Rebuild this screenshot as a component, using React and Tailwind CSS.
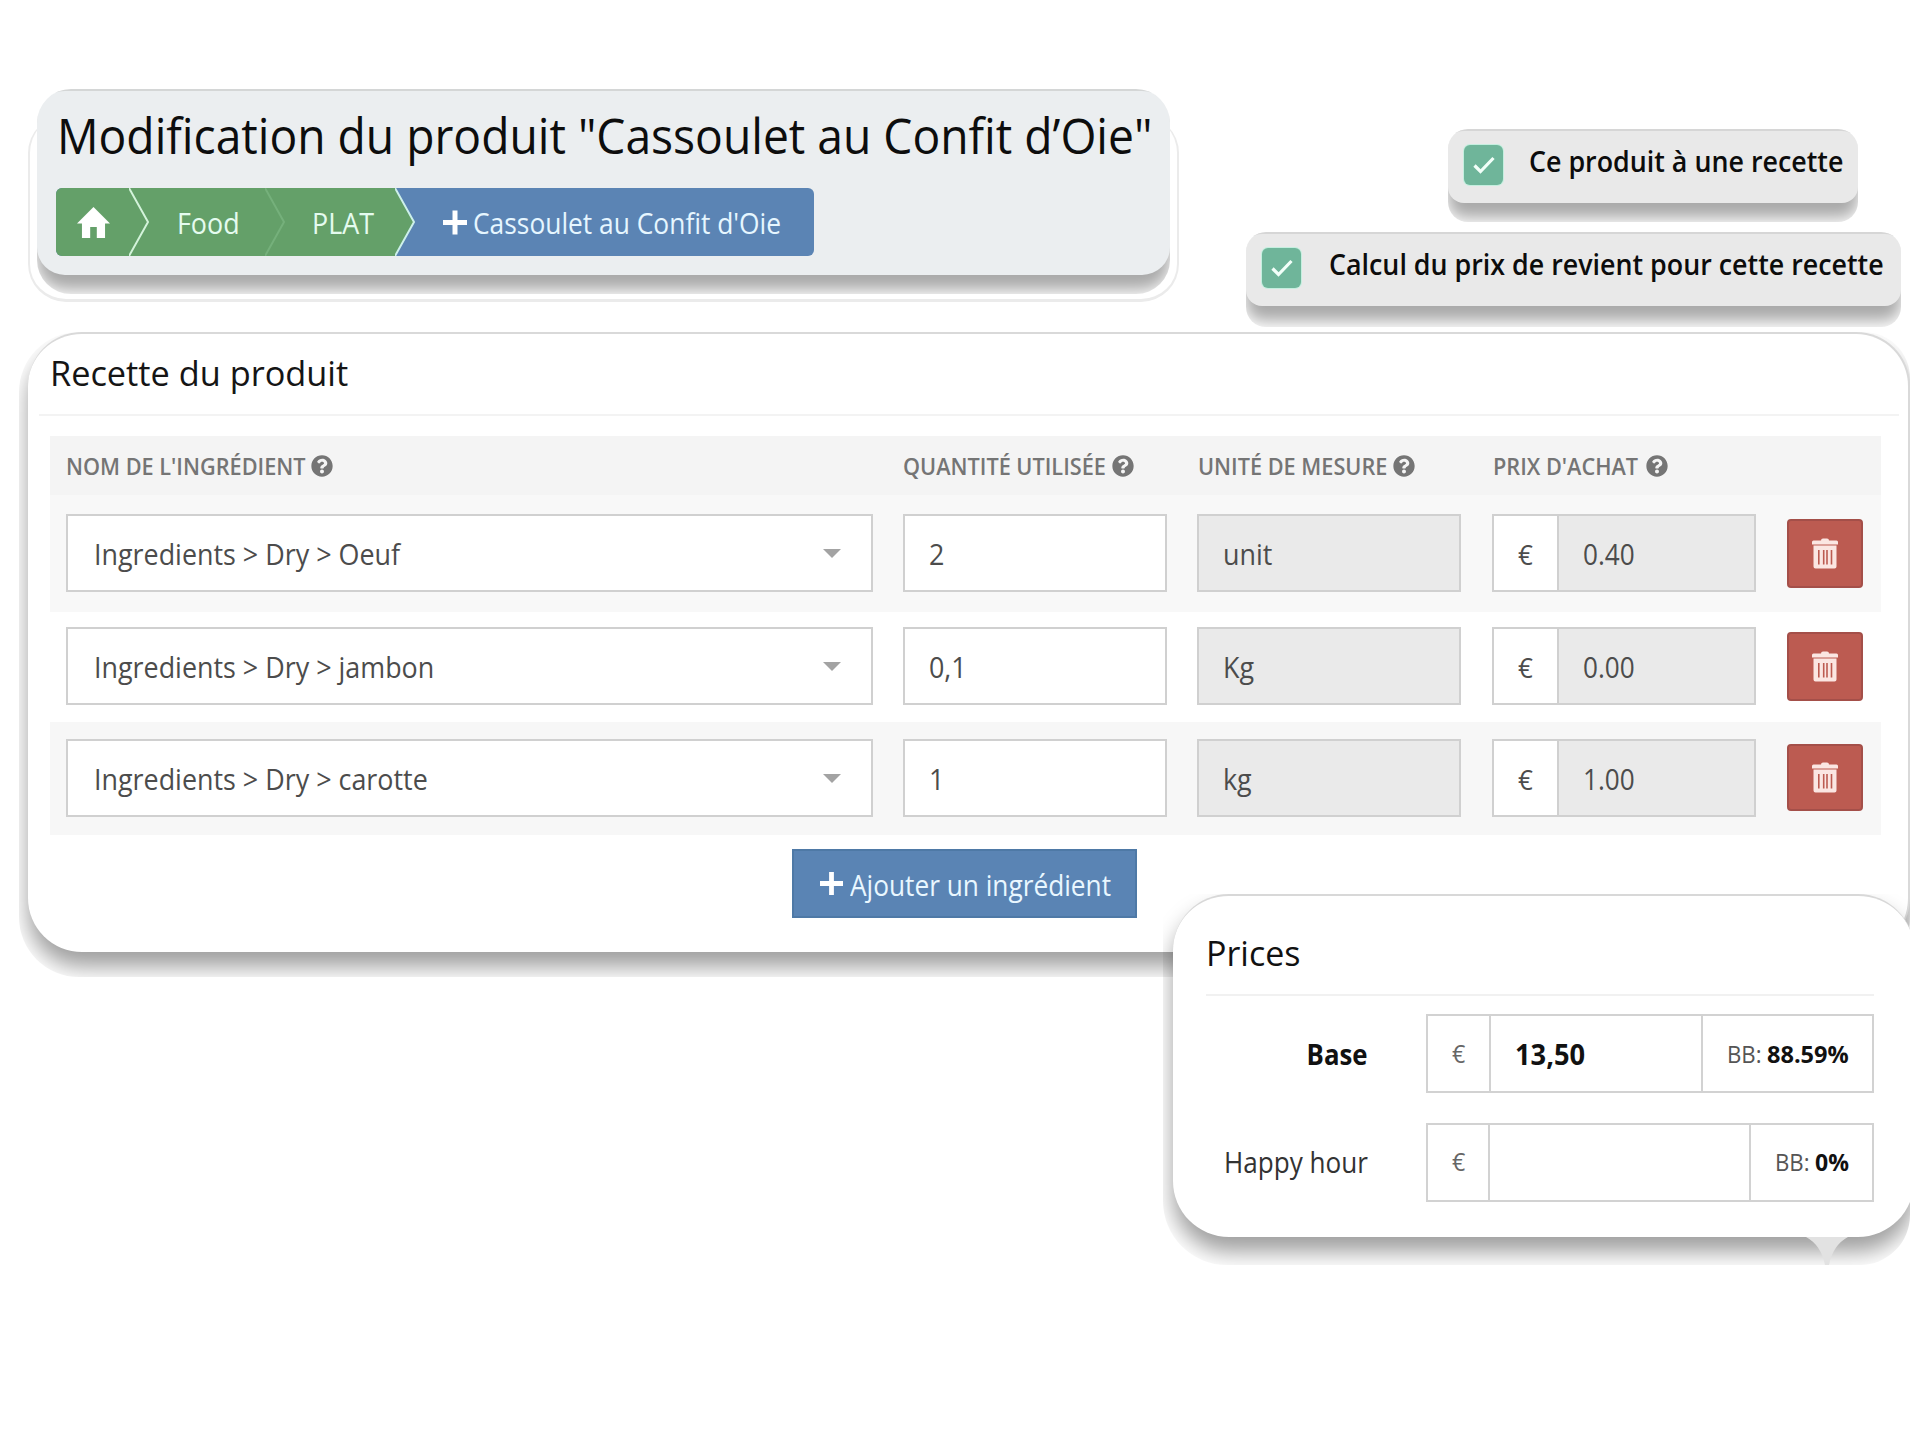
import { FaQuestionCircle } from 'react-icons/fa';

const ingredients = [
  { name: 'Ingredients > Dry > Oeuf', qty: '2', unit: 'unit', price: '0.40' },
  { name: 'Ingredients > Dry > jambon', qty: '0,1', unit: 'Kg', price: '0.00' },
  { name: 'Ingredients > Dry > carotte', qty: '1', unit: 'kg', price: '1.00' },
];

// slightly condensed label, squeezed towards its origin
function Text({ className = 'origin-left scale-x-[0.927]', children }) {
  return <span className={`inline-block whitespace-nowrap ${className}`}>{children}</span>;
}

function PlusIcon({ className }) {
  return (
    <svg className={`shrink-0 ${className}`} viewBox="0 0 24 24" fill="currentColor">
      <path d="M9.5 0h5v9.5H24v5h-9.5V24h-5v-9.5H0v-5h9.5z" />
    </svg>
  );
}

function TrashIcon() {
  return (
    <svg className="h-[31px] w-[26px] text-[#fbe6e2]" viewBox="0 0 26 31" fill="currentColor">
      <path d="M9 2.5Q9 .5 11 .5h4Q17 .5 17 2.5h7.5Q26 2.5 26 4v2.5H0V4Q0 2.5 1.5 2.5z" />
      <path fillRule="evenodd" d="M1.5 7.5h23v21q0 2-2 2h-19q-2 0-2-2zM6 12v14.500h1.600V12zm4.900 0v14.500h1.600V12zm3.300 0v14.500h1.600V12zm4.500 0v14.500h1.600V12z" />
    </svg>
  );
}

function Chevron({ stroke, fill, className }) {
  return (
    <svg className={`h-full w-5 shrink-0 ${className}`} viewBox="0 0 20 68" fill="none">
      <path d="M0 0 19 34 0 68z" fill={fill} />
      <path d="M0 0 19 34 0 68" stroke={stroke} strokeWidth="2" />
    </svg>
  );
}

function Breadcrumb() {
  return (
    <nav className="flex h-[68px] w-[758px] items-center overflow-hidden rounded-[6px] bg-[#5b84b4] text-[29px] text-[#e4fbef]">
      <span className="flex h-full w-[73px] items-center bg-[#64a069] pl-[21px]">
        <svg className="h-[31px] w-[33px] text-white" viewBox="2 3 20 17" preserveAspectRatio="none" fill="currentColor">
          <path d="M10 20v-6h4v6h5v-8h3L12 3 2 12h3v8z" />
        </svg>
      </span>
      <Chevron stroke="#d3f3da" fill="#64a069" className="bg-[#64a069]" />
      <span className="flex h-full w-[116px] items-center bg-[#64a069] pt-[2px] pl-[28px]">
        <Text>Food</Text>
      </span>
      <Chevron stroke="#75b07b" fill="#64a069" className="bg-[#64a069]" />
      <span className="flex h-full w-[110px] items-center bg-[#64a069] pt-[2px] pl-[27px]">
        <Text>PLAT</Text>
      </span>
      <Chevron stroke="#cdf0ea" fill="#64a069" className="" />
      <PlusIcon className="ml-7 h-[25px] w-[24px] text-white" />
      <span className="mt-[2px] ml-[6px] text-[#e6f6ff]">
        <Text className="origin-left scale-x-[0.909]">Cassoulet au Confit d'Oie</Text>
      </span>
    </nav>
  );
}

function OptionCard({ wrapClass, labelClass, label }) {
  return (
    <div className={`overflow-hidden rounded-[20px] ${wrapClass}`}>
      <div className="flex h-[74px] rounded-[16px] border-t-2 border-[#d6d6d6] bg-[#e9e9e9] shadow-[0_15px_16px_rgba(0,0,0,0.34)]">
        <span className="mt-[14px] ml-[16px] flex h-10 w-[39px] shrink-0 items-center justify-center rounded-[6px] bg-[#6fb59a] ring-1 ring-[#c4efdf]">
          <svg className="h-[18px] w-[22px]" viewBox="0 0 22 18" fill="none" stroke="#f2fff9" strokeWidth="3.2">
            <path d="M1.5 9.5 7.5 15.5 20.5 2" />
          </svg>
        </span>
        <span className={`mt-[8px] text-[28px] leading-[44px] font-semibold text-[#0c0c0c] ${labelClass}`}>
          <Text className="origin-left scale-x-[0.958]">{label}</Text>
        </span>
      </div>
    </div>
  );
}

function HeadCell({ className, labelClass, label }) {
  return (
    <div className={`flex h-[34px] items-center ${className}`}>
      <span className={labelClass}>
        <Text className="origin-left scale-x-[0.943]">{label}</Text>
      </span>
      <FaQuestionCircle className="h-[22px] w-[22px] text-[#757575]" />
    </div>
  );
}

function IngredientRow({ item, className, buttonClass = 'h-[69px]' }) {
  return (
    <div className={`flex pl-[16px] text-[29px] text-[#4c4c4c] ${className}`}>
      <div className="flex h-[78px] w-[807px] items-center justify-between border-2 border-[#d0d0d0] bg-white pr-[30px] pl-[26px]">
        <span className="mt-[1px]"><Text>{item.name}</Text></span>
        <svg className="h-[9px] w-[18px]" viewBox="0 0 18 9" fill="#a3a3a3">
          <path d="M0 0h18L9 9z" />
        </svg>
      </div>
      <div className="ml-[30px] flex h-[78px] w-[264px] items-center border-2 border-[#d0d0d0] bg-white pt-[1px] pl-[24px]">
        <Text>{item.qty}</Text>
      </div>
      <div className="ml-[30px] flex h-[78px] w-[264px] items-center border-2 border-[#d0d0d0] bg-[#eaeaea] pt-[1px] pl-[24px]">
        <Text>{item.unit}</Text>
      </div>
      <div className="ml-[31px] flex h-[78px] w-[264px] border-2 border-[#d0d0d0] bg-[#eaeaea]">
        <span className="flex w-[65px] items-center border-r-2 border-[#d0d0d0] bg-white pt-[1px] pl-6 text-[28px]">
          <Text>€</Text>
        </span>
        <span className="flex items-center pt-[1px] pl-6">
          <Text className="origin-left scale-x-[0.9]">{item.price}</Text>
        </span>
      </div>
      <button className={`mt-[5px] ml-[31px] flex w-[76px] items-center justify-center rounded-[4px] border-2 border-[#a44f49] bg-[#bc5b51] ${buttonClass}`}>
        <TrashIcon />
      </button>
    </div>
  );
}

function Prices() {
  return (
    <section className="mt-[-83px] ml-[1163px] h-[371px] w-[747px] overflow-hidden rounded-bl-[64px] rounded-br-[50px] pl-[10px]">
      <div className="relative h-[343px] w-[741px] rounded-[56px] border-t-2 border-[#d8d8d8] bg-white pt-[33px] pl-[33px] shadow-[0_15px_22px_rgba(0,0,0,0.38)]">
        <h2 className="h-[49px] text-[34px] leading-[49px] text-[#111]">
          <Text className="origin-left">Prices</Text>
        </h2>
        <div className="mt-[16px] h-[2px] w-[668px] bg-[#f1f1f1]" />
        <div className="mt-[18px] flex h-[79px] w-[668px] items-center">
          <span className="w-[162px] text-right text-[29px] font-bold text-[#111]">
            <Text className="origin-right scale-x-[0.89]">Base</Text>
          </span>
          <div className="ml-auto flex h-full w-[448px] border-2 border-[#d2d2d2]">
            <span className="flex w-[63px] items-center border-r-2 border-[#d2d2d2] pl-6 text-[25px] text-[#666]">
              <Text>€</Text>
            </span>
            <span className="flex w-[212px] items-center border-r-2 border-[#d2d2d2] pt-[1px] pl-[24px] text-[29px] font-bold text-[#111]">
              <Text className="origin-left scale-x-[0.94]">13,50</Text>
            </span>
            <span className="flex items-center pl-[24px] text-[24px] text-[#555]">
              <Text>BB:</Text>
              <b className="ml-[3px] font-bold text-[#111]"><Text className="origin-left scale-x-[0.98]">88.59%</Text></b>
            </span>
          </div>
        </div>
        <div className="mt-[30px] flex h-[79px] w-[668px] items-center">
          <span className="mb-[2px] w-[162px] text-right text-[29px] text-[#333]">
            <Text className="origin-right scale-x-[0.9]">Happy hour</Text>
          </span>
          <div className="ml-auto flex h-full w-[448px] border-2 border-[#d2d2d2]">
            <span className="flex w-[62px] items-center border-r-2 border-[#d2d2d2] pb-[2px] pl-6 text-[25px] text-[#666]">
              <Text>€</Text>
            </span>
            <span className="w-[261px] border-r-2 border-[#d2d2d2]" />
            <span className="flex items-center pb-[2px] pl-[24px] text-[24px] text-[#555]">
              <Text>BB:</Text>
              <b className="ml-[3px] font-bold text-[#111]"><Text className="origin-left scale-x-[0.96]">0%</Text></b>
            </span>
          </div>
        </div>
        <svg className="absolute top-[341px] left-[633px] h-[28px] w-[42px]" viewBox="0 0 42 28">
          <path d="M0 0Q15 8 19 28h4Q27 8 42 0z" fill="#e2e2e2" />
        </svg>
      </div>
    </section>
  );
}

export default function App() {
  return (
    <div className="h-[1440px] w-[1920px] overflow-hidden bg-white [font-family:'Open_Sans','Noto_Sans',sans-serif]">
      <header className="flex h-[332px]">
        <div className="relative mt-[89px] ml-[28px] h-[213px] w-[1151px] px-[9px]">
          {/* faint outline around the title card */}
          <div className="absolute inset-x-0 top-[26px] bottom-0 rounded-[38px] border-x-2 border-b-3 border-[#ebebeb]" />
          <div className="relative h-[205px] overflow-hidden rounded-[34px]">
            <div className="h-[186px] rounded-[28px] border-t-2 border-[#d4d6d6] bg-[#ebeef0] pt-[12px] pl-[19px] shadow-[0_15px_16px_rgba(0,0,0,0.34)]">
              <h1 className="h-[64px] pl-px text-[49px] leading-[64px] text-[#0d0d0d]">
                <Text className="origin-left scale-x-[0.943]">Modification du produit "Cassoulet au Confit d’Oie"</Text>
              </h1>
              <div className="mt-[21px]">
                <Breadcrumb />
              </div>
            </div>
          </div>
        </div>
        <div className="mt-[129px] ml-[67px] flex w-[655px] flex-col">
          <OptionCard wrapClass="ml-[202px] h-[93px] w-[410px]" labelClass="ml-[26px]" label="Ce produit à une recette" />
          <OptionCard wrapClass="mt-[10px] h-[95px]" labelClass="ml-[28px]" label="Calcul du prix de revient pour cette recette" />
        </div>
      </header>

      <main className="ml-[19px] h-[645px] w-[1891px] overflow-hidden rounded-[60px] rounded-tr-[46px] pl-[9px]">
        <div className="h-[620px] w-[1882px] rounded-[54px] border-t-2 border-r-2 border-[#d9d9d9] bg-white pt-[15px] shadow-[0_15px_22px_rgba(0,0,0,0.38)]">
          <h2 className="h-[48px] pl-[22px] text-[35px] leading-[48px] text-[#151515]">
            <Text className="origin-left scale-x-[0.98]">Recette du produit</Text>
          </h2>
          <div className="mt-[17px] ml-[11px] h-[2px] w-[1860px] bg-[#f3f3f3]" />
          <div className="mt-[20px] ml-[22px] w-[1831px]">
            <div className="flex h-[59px] bg-[#f4f4f4] pt-[13px] pl-[16px] text-[23px] font-semibold text-[#757575]">
              <HeadCell className="w-[837px]" labelClass="w-[245px]" label="NOM DE L'INGRÉDIENT" />
              <HeadCell className="w-[295px]" labelClass="w-[209px]" label="QUANTITÉ UTILISÉE" />
              <HeadCell className="w-[295px]" labelClass="w-[195px]" label="UNITÉ DE MESURE" />
              <HeadCell className="" labelClass="w-[153px]" label="PRIX D'ACHAT" />
            </div>
            <IngredientRow item={ingredients[0]} className="h-[117px] bg-[#f8f8f8] pt-[19px]" />
            <IngredientRow item={ingredients[1]} className="h-[110px] pt-[15px]" />
            <IngredientRow item={ingredients[2]} className="h-[113px] bg-[#f7f7f7] pt-[17px]" buttonClass="h-[67px]" />
          </div>
          <button className="mt-[14px] ml-[764px] flex h-[69px] w-[345px] items-center border-2 border-[#4e79a6] bg-[#5a84b4] pl-[26px] text-[29px] text-[#e9f7ff]">
            <PlusIcon className="h-[23px] w-[23px] text-white" />
            <span className="mt-[2px] ml-[7px]">
              <Text className="origin-left scale-x-[0.905]">Ajouter un ingrédient</Text>
            </span>
          </button>
        </div>
      </main>

      <Prices />
    </div>
  );
}
